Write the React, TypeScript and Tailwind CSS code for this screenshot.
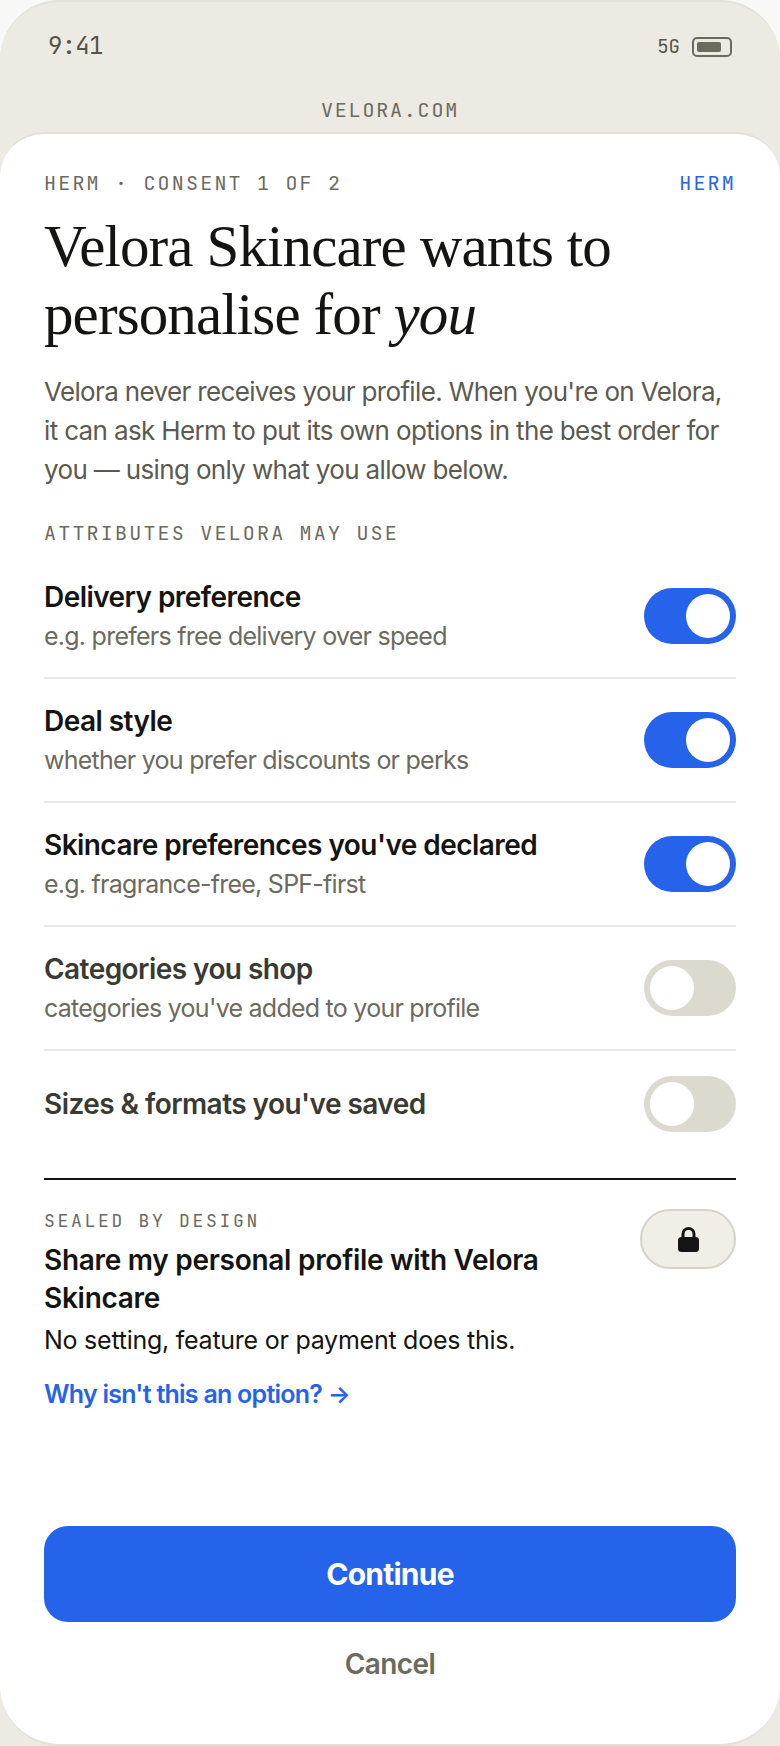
const mono = "font-['JetBrains_Mono','DejaVu_Sans_Mono','Liberation_Mono',monospace]";

const attributes = [
	{ title: "Delivery preference", hint: "e.g. prefers free delivery over speed", on: true },
	{ title: "Deal style", hint: "whether you prefer discounts or perks", on: true },
	{ title: "Skincare preferences you've declared", hint: "e.g. fragrance-free, SPF-first", on: true },
	{ title: "Categories you shop", hint: "categories you've added to your profile", on: false },
	{ title: "Sizes & formats you've saved", hint: "", on: false },
];

function Toggle({ on }: { on: boolean }) {
	return (
		<div
			className={
				"flex h-[56px] w-[92px] shrink-0 items-center rounded-full p-[6px] " +
				(on ? "justify-end bg-[#2563eb]" : "justify-start bg-[#dcdacf]")
			}
		>
			<div className="h-[44px] w-[44px] rounded-full bg-white" />
		</div>
	);
}

function AttributeRow({ title, hint, on, last }: { title: string; hint: string; on: boolean; last: boolean }) {
	return (
		<div
			className={
				"flex items-center justify-between " +
				(last ? "h-[106px]" : "h-[124px] border-b-2 border-[#e8e8e6]")
			}
		>
			<div>
				<div className={"text-[28px] leading-[38px] font-semibold tracking-[-0.02em] " + (on ? "text-[#141412]" : "text-[#3a3a35]")}>
					{title}
				</div>
				{hint && <div className="mt-[1px] text-[25px] leading-[38px] tracking-[-0.03em] text-[#6b6a5f]">{hint}</div>}
			</div>
			<Toggle on={on} />
		</div>
	);
}

export default function App() {
	return (
		<div className="h-[1746px] w-[780px] bg-[#f8f8f6] font-['Inter','Noto_Sans',sans-serif]">
			<div className="flex h-full flex-col rounded-t-[60px] border-t-2 border-[#e2e0d8] bg-[#eceae2]">
				<div className={"flex h-[87px] items-center justify-between pt-[3px] pl-[48px] pr-[48px] text-[#55544a] " + mono}>
					<span className="mb-[3px] text-[24px] tracking-[-0.03em]">9:41</span>
					<div className="flex items-center gap-[12px]">
						<span className="text-[19px]">5G</span>
						<div className="flex h-[20px] w-[40px] items-center rounded-[5px] border-2 border-[#6b6a5f] p-[3px]">
							<div className="h-full w-[24px] rounded-[2px] bg-[#6b6a5f]" />
						</div>
					</div>
				</div>
				<div className={"mb-[1px] text-center text-[20px] leading-[42px] tracking-[1.8px] text-[#6b6a5f] " + mono}>
					VELORA.COM
				</div>
				<div className="flex flex-1 flex-col rounded-t-[44px] rounded-b-[60px] border-y-2 border-[#e2e0d8] bg-white px-[44px]">
					<div className={"mt-[35px] flex justify-between text-[20px] leading-[28px] tracking-[2.2px] text-[#6b6a5f] " + mono}>
						<span>HERM · CONSENT 1 OF 2</span>
						<span className="text-[#2563eb]">HERM</span>
					</div>
					<h1 className="mt-[15px] font-['Liberation_Serif',serif] text-[59px] leading-[68px] font-normal tracking-[-0.015em] text-[#141412]">
						Velora Skincare wants to
						<br />
						personalise for <em>you</em>
					</h1>
					<p className="mt-[24px] text-[26px] leading-[39px] tracking-[-0.025em] text-[#5b5a50]">
						Velora never receives your profile. When you're on Velora, it can ask Herm to put its own options in the best order for you — using only what you allow below.
					</p>
					<div className={"mt-[30px] mb-[8px] text-[20px] leading-[28px] tracking-[2.2px] text-[#6b6a5f] " + mono}>
						ATTRIBUTES VELORA MAY USE
					</div>
					{attributes.map((a, i) => (
						<AttributeRow key={a.title} {...a} last={i === attributes.length - 1} />
					))}
					<div className="mt-[21px] flex items-start justify-between border-t-2 border-[#141412] pt-[29px]">
						<div className="w-[500px]">
							<div className={"text-[18px] leading-[24px] tracking-[2.7px] text-[#6b6a5f] " + mono}>SEALED BY DESIGN</div>
							<div className="mt-[8px] text-[28px] leading-[38px] font-semibold tracking-[-0.01em] text-[#141412]">
								Share my personal profile with Velora Skincare
							</div>
							<div className="mt-[4px] text-[25px] leading-[38px] tracking-[-0.01em] text-[#141412]">No setting, feature or payment does this.</div>
							<div className="mt-[16px] text-[25px] leading-[38px] font-semibold tracking-[-0.03em] text-[#2563eb]">Why isn't this an option? <span className="text-[24px]">→</span></div>
						</div>
						<div className="flex h-[60px] w-[96px] items-center justify-center rounded-full border-2 border-[#d6d4c8] bg-[#f0eee6]">
							<svg width="21" height="26" viewBox="0 0 21 26">
								<path d="M5 12V8a5.5 5.5 0 0 1 11 0v4" fill="none" stroke="#141412" strokeWidth="3" />
								<rect x="0" y="11" width="21" height="15" rx="3.5" fill="#141412" />
							</svg>
						</div>
					</div>
					<div className="mt-auto flex h-[96px] items-center justify-center rounded-[24px] bg-[#2563eb] text-[30px] font-bold tracking-[-0.025em] text-white">
						Continue
					</div>
					<div className="mt-[23px] mb-[61px] text-center text-[28px] leading-[38px] font-semibold tracking-[-0.02em] text-[#6b6a5f]">Cancel</div>
				</div>
			</div>
		</div>
	);
}
